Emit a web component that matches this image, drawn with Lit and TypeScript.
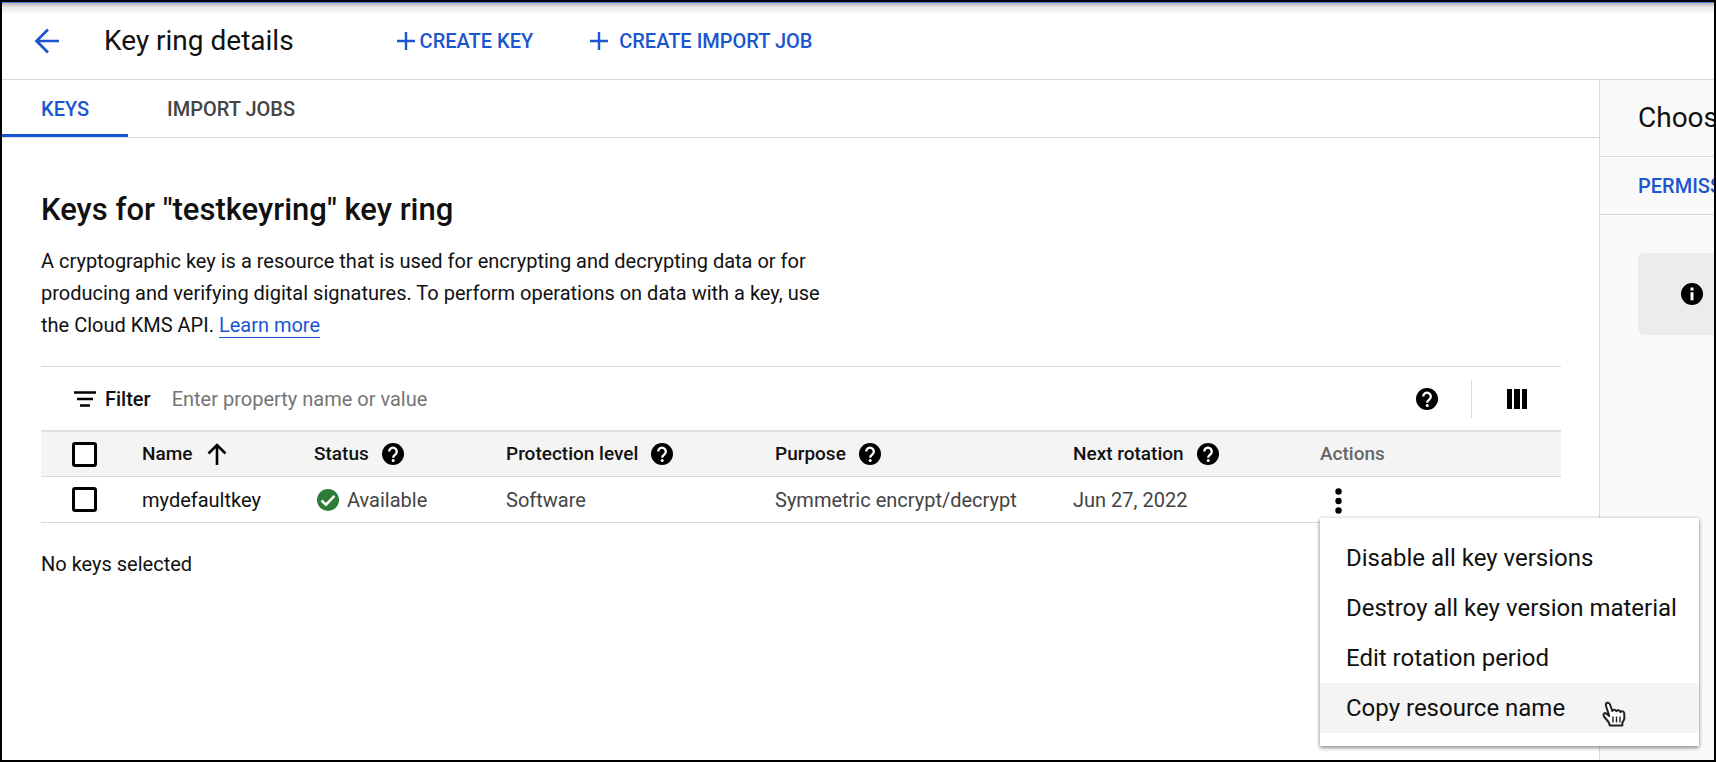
import { LitElement, html, css, nothing } from "lit";
import { customElement, state } from "lit/decorators.js";

const helpIcon = html`<svg class="icon help" viewBox="0 0 22 22" aria-hidden="true">
  <circle cx="11" cy="11" r="11" fill="#000"/>
  <path d="M7.200 8.500a3.800 3.800 0 1 1 6.300 2.900c-1.400 1.200-2.300 1.600-2.300 3.300" fill="none" stroke="#fff" stroke-width="2.300"/>
  <circle cx="11.200" cy="17.400" r="1.500" fill="#fff"/>
</svg>`;

const plusIcon = html`<svg class="icon plus" viewBox="0 0 20 20" aria-hidden="true">
  <path d="M10 1v18M1 10h18" fill="none" stroke="#1a56d0" stroke-width="2.400"/>
</svg>`;

interface Column {
  label: string;
  help?: boolean;
  sorted?: boolean;
  muted?: boolean;
}

const columns: Column[] = [
  { label: "Name", sorted: true },
  { label: "Status", help: true },
  { label: "Protection level", help: true },
  { label: "Purpose", help: true },
  { label: "Next rotation", help: true },
  { label: "Actions", muted: true },
];

const keys = [
  {
    name: "mydefaultkey",
    status: "Available",
    protection: "Software",
    purpose: "Symmetric encrypt/decrypt",
    rotation: "Jun 27, 2022",
  },
];

const menuItems = [
  "Disable all key versions",
  "Destroy all key version material",
  "Edit rotation period",
  "Copy resource name",
];

@customElement("app-root")
export class AppRoot extends LitElement {
  @state() private menuOpen = true;

  static styles = css`
    :host {
      display: block;
      font-family: Roboto, "Liberation Sans", sans-serif;
      font-size: 20px;
      line-height: 32px;
      color: #111;
    }
    * { box-sizing: border-box; }
    button, input { font: inherit; color: inherit; }
    button { border: 0; padding: 0; background: none; cursor: pointer; }
    h1, h2, p { margin: 0; font-weight: 400; }
    a { color: #1a56d0; text-decoration: none; }
    .icon { display: block; flex: none; }
    .help { width: 22px; height: 22px; }
    .plus { width: 20px; height: 20px; }
    .frame {
      display: flex;
      flex-direction: column;
      min-height: 100vh;
      border: 2px solid #000;
      background: #fff;
      overflow: hidden;
    }
    .topbar {
      display: flex;
      align-items: center;
      height: 78px;
      padding-left: 32px;
      border-top: 1px solid #5a82e6;
      border-bottom: 1px solid #dadada;
      background: linear-gradient(#b4b4b4, #e6e6e6 4px, #fff 11px);
    }
    .back { width: 26px; height: 26px; }
    h1 { font-size: 28px; margin-left: 44px; }
    .actions { display: flex; gap: 56px; margin-left: 102px; color: #1a56d0; font-weight: 500; }
    .actions button { display: flex; align-items: center; gap: 4px; }
    .actions .spaced { gap: 10px; }
    .body { display: grid; flex: 1; grid-template-columns: minmax(0, 1fr) 115px; }
    .tabs { display: flex; height: 58px; border-bottom: 1px solid #dadada; font-weight: 500; }
    .tabs button { padding: 3px 39px 0; color: #444; font-weight: 500; border-bottom: 3px solid transparent; }
    .tabs .active { color: #1a56d0; border-bottom-color: #1a56d0; }
    .content { padding: 52px 38px 0 39px; }
    h2 { font-size: 31px; line-height: 40px; font-weight: 500; }
    .intro { max-width: 810px; margin-top: 15px; }
    .intro a { border-bottom: 1px solid #1a56d0; }
    .filter {
      display: flex;
      align-items: center;
      height: 64px;
      margin-top: 25px;
      padding: 0 34px 0 33px;
      border-top: 1px solid #dadada;
    }
    .filter label { margin-left: 9px; font-weight: 500; }
    .filter input { flex: 1; min-width: 0; margin-left: 21px; padding: 0; border: 0; outline: 0; background: none; }
    .filter input::placeholder { color: #757575; opacity: 1; }
    .divider { width: 1px; height: 38px; margin: 0 35px 0 33px; background: #dadada; }
    table { width: 100%; border-collapse: separate; border-spacing: 0; table-layout: fixed; }
    th, td { padding: 0; text-align: left; height: 46px; border-bottom: 1px solid #dadada; }
    th { height: 47px; font-size: 19px; font-weight: 500; border-top: 2px solid #e0e0e0; background: #f4f4f4; }
    td { color: #444; }
    td.name { color: #111; }
    th.muted { color: #666; }
    .c-check { width: 101px; }
    .c-name { width: 172px; }
    .c-status { width: 192px; }
    .c-protection { width: 269px; }
    .c-purpose { width: 298px; }
    .c-rotation { width: 247px; }
    .cell { display: flex; align-items: center; gap: 13px; }
    .cell.status { gap: 8px; padding-left: 3px; }
    .check {
      appearance: none;
      display: block;
      width: 25px;
      height: 25px;
      margin: 0 0 0 31px;
      border: 3px solid #000;
      border-radius: 3px;
      background: #fff;
    }
    .check:checked { background: #1a56d0; }
    .more { position: relative; width: 36px; height: 36px; }
    .kebab { width: 36px; height: 34px; }
    .menu {
      position: absolute;
      z-index: 2;
      top: 36px;
      left: 0;
      margin: 0;
      padding: 15px 0 13px;
      list-style: none;
      background: #fff;
      box-shadow: 0 2px 4px rgba(0, 0, 0, 0.4), 0 0 4px rgba(0, 0, 0, 0.15);
    }
    .menu button {
      display: block;
      width: 100%;
      height: 50px;
      padding: 0 22px 0 26px;
      font-size: 24px;
      color: #111;
      text-align: left;
      white-space: nowrap;
    }
    .menu .hover { background: #f4f4f4; }
    .pointer { position: absolute; right: 70px; bottom: 17px; width: 29px; height: 30px; }
    .selected { margin-top: 25px; }
    aside { border-left: 1px solid #dadada; background: #fafafa; overflow: hidden; white-space: nowrap; }
    .panel-title { height: 77px; padding: 22px 0 0 38px; font-size: 28px; border-bottom: 1px solid #dadada; }
    .panel-tab { height: 58px; padding: 13px 0 0 38px; border-bottom: 1px solid #dadada; }
    .panel-tab button { color: #1a56d0; font-weight: 500; }
    .notice { display: flex; align-items: center; height: 82px; margin: 38px 0 0 38px; padding-left: 43px; border-radius: 6px 0 0 6px; background: #ececec; }
  `;

  private toggleMenu() {
    this.menuOpen = !this.menuOpen;
  }

  private renderHeader(column: Column) {
    return html`<th scope="col" class=${column.muted ? "muted" : ""}>
      <div class="cell">
        <span>${column.label}</span>
        ${column.sorted
          ? html`<svg class="icon" width="22" height="24" viewBox="0 0 22 24" aria-hidden="true">
              <path d="M12 23V3M3.500 11.500L12 3l8.500 8.500" fill="none" stroke="#000" stroke-width="2.600"/>
            </svg>`
          : nothing}
        ${column.help ? helpIcon : nothing}
      </div>
    </th>`;
  }

  private renderMenu() {
    return html`<ul class="menu" role="menu">
      ${menuItems.map(
        (item, i) => html`<li role="none">
          <button role="menuitem" class=${i === 3 ? "hover" : ""}>${item}</button>
        </li>`
      )}
      <svg class="pointer" viewBox="0 0 29 30" aria-hidden="true">
        <path d="M10 26.500L8.500 23L4 17.500C2.500 15 4.500 13.300 6.500 14.700L9.300 17L6 7C5.300 3.500 9 2.500 10 5.500l2.300 6.500c.5-1.800 3.400-1.600 4 .3.700-1.700 3.600-1.300 4 .7 1.200-1.400 4-.8 4 1.800v5.200l-2 4v2.500z" fill="#fff" stroke="#222" stroke-width="2" stroke-linejoin="round"/>
        <path d="M13 17.500v6M16.500 17.500v6M20 17.500v6" stroke="#222" stroke-width="1.400"/>
      </svg>
    </ul>`;
  }

  render() {
    return html`<div class="frame">
      <header class="topbar">
        <button aria-label="Back">
          <svg class="icon back" viewBox="0 0 26 26" aria-hidden="true">
            <path d="M25 13H3M14 1.500L2.500 13L14 24.500" fill="none" stroke="#1a56d0" stroke-width="2.700"/>
          </svg>
        </button>
        <h1>Key ring details</h1>
        <div class="actions">
          <button>${plusIcon}CREATE KEY</button>
          <button class="spaced">${plusIcon}CREATE IMPORT JOB</button>
        </div>
      </header>
      <div class="body">
        <main>
          <nav class="tabs">
            <button class="active">KEYS</button>
            <button>IMPORT JOBS</button>
          </nav>
          <section class="content">
            <h2>Keys for "testkeyring" key ring</h2>
            <p class="intro">
              A cryptographic key is a resource that is used for encrypting and decrypting data or for
              producing and verifying digital signatures. To perform operations on data with a key, use
              the Cloud KMS API. <a href="#learn">Learn more</a>
            </p>
            <div class="filter">
              <svg class="icon" width="22" height="16" viewBox="0 0 22 16" aria-hidden="true">
                <path d="M0 1.500h22M3 8h16M6 14.500h10" stroke="#000" stroke-width="2.600"/>
              </svg>
              <label for="filter">Filter</label>
              <input id="filter" type="text" placeholder="Enter property name or value" />
              <button aria-label="Help">${helpIcon}</button>
              <span class="divider"></span>
              <button aria-label="Column display options">
                <svg class="icon" width="20" height="20" viewBox="0 0 20 20" aria-hidden="true">
                  <path d="M0 0h5v20H0zM7 0h6v20H7zM15 0h5v20h-5z" fill="#000"/>
                </svg>
              </button>
            </div>
            <table>
              <colgroup>
                <col class="c-check" /><col class="c-name" /><col class="c-status" />
                <col class="c-protection" /><col class="c-purpose" /><col class="c-rotation" /><col />
              </colgroup>
              <thead>
                <tr>
                  <th><input class="check" type="checkbox" aria-label="Select all keys" /></th>
                  ${columns.map((c) => this.renderHeader(c))}
                </tr>
              </thead>
              <tbody>
                ${keys.map(
                  (k) => html`<tr>
                    <td><input class="check" type="checkbox" aria-label="Select ${k.name}" /></td>
                    <td class="name">${k.name}</td>
                    <td>
                      <div class="cell status">
                        <svg class="icon help" viewBox="0 0 22 22" aria-hidden="true">
                          <circle cx="11" cy="11" r="11" fill="#2e7d37"/>
                          <path d="M4.500 11.500L9 15.700L17.500 6.800" fill="none" stroke="#fff" stroke-width="2.400"/>
                        </svg>
                        <span>${k.status}</span>
                      </div>
                    </td>
                    <td>${k.protection}</td>
                    <td>${k.purpose}</td>
                    <td>${k.rotation}</td>
                    <td>
                      <div class="more">
                        <button aria-label="Actions" aria-haspopup="menu" @click=${this.toggleMenu}>
                          <svg class="icon kebab" viewBox="0 0 36 34" aria-hidden="true">
                            <circle cx="18.500" cy="9.500" r="3.200"/><circle cx="18.500" cy="19" r="3.200"/><circle cx="18.500" cy="28.500" r="3.200"/>
                          </svg>
                        </button>
                        ${this.menuOpen ? this.renderMenu() : nothing}
                      </div>
                    </td>
                  </tr>`
                )}
              </tbody>
            </table>
            <p class="selected">No keys selected</p>
          </section>
        </main>
        <aside>
          <div class="panel-title">Choose a key</div>
          <div class="panel-tab"><button>PERMISSIONS</button></div>
          <div class="notice">
            <svg class="icon help" viewBox="0 0 22 22" aria-hidden="true">
              <circle cx="11" cy="11" r="11" fill="#000"/>
              <path d="M9.500 4.500h3v3h-3zM9.500 9.300h3v8h-3z" fill="#fff"/>
            </svg>
          </div>
        </aside>
      </div>
    </div>`;
  }
}
